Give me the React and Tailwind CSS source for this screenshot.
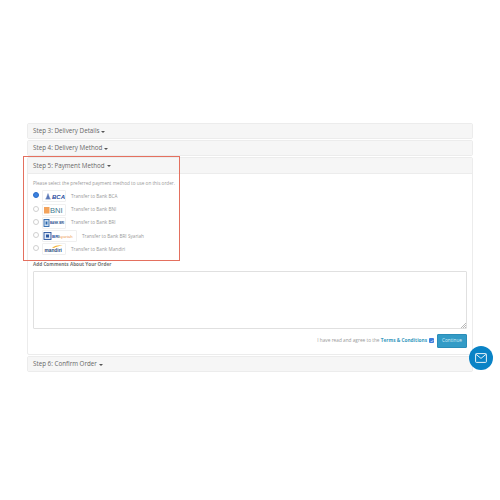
import React from "react";

const Caret = () => <span className="inline-block ml-[2px] align-middle w-0 h-0 border-x-[2px] border-x-transparent border-t-[2px] border-t-[#555]" />;

const Head = ({ children, open }) => (
  <div className={open
    ? "flex items-center h-[16px] px-[5px] bg-[#f6f6f6] text-[#666] text-[6.25px] border-b border-[#ececec]"
    : "flex items-center h-[14px] px-[5px] bg-[#f6f6f6] text-[#666] text-[6.25px]"}>
    <span>{children}<Caret /></span>
  </div>
);

const Panel = ({ children }) => (
  <div className="border border-[#ececec] rounded-[2px] bg-white">{children}</div>
);

const Logo = ({ w = 24, children }) => (
  <div className="h-[12px] border border-[#f0f0f0] rounded-[1px] bg-white flex items-center justify-center overflow-hidden" style={{ width: w }}>
    {children}
  </div>
);

const Row = ({ checked, w, logo, label }) => (
  <div className="flex items-center h-[13.3px]">
    <div className={checked
      ? "w-[6px] h-[6px] rounded-full mr-[3px] -mt-[2px] bg-[#3b82e0] border border-[#2a6cc8]"
      : "w-[6px] h-[6px] rounded-full mr-[3px] -mt-[2px] border border-[#d0d0d0] bg-white"} />
    <Logo w={w}>{logo}</Logo>
    <span className="ml-[5px] text-[4.7px] text-[#999]">{label}</span>
  </div>
);

const Bca = () => (
  <svg width="21" height="8" viewBox="0 0 21 8">
    <path d="M2 7 L4 1.5 L6 7Z M1 7 H7" fill="#5b78b8" stroke="#5b78b8" strokeWidth="0.4" />
    <text x="8" y="6.8" fontSize="6" fontWeight="700" fontStyle="italic" fill="#1f4a9c" fontFamily="Liberation Sans, sans-serif">BCA</text>
  </svg>
);
const Bni = () => (
  <svg width="22" height="10" viewBox="0 0 22 10">
    <rect x="1" y="2" width="5.5" height="6.5" fill="#f3a35c" />
    <text x="7" y="8.4" fontSize="7.6" fill="#3f7a92" fontFamily="Liberation Sans, sans-serif">BNI</text>
  </svg>
);
const Bri = () => (
  <svg width="22" height="10" viewBox="0 0 22 10">
    <rect x="1" y="1.5" width="5" height="7" fill="#cfe0f2" stroke="#2a66ac" strokeWidth="0.9" />
    <rect x="2.6" y="3.5" width="1.8" height="3" fill="#2a66ac" />
    <text x="7" y="6.3" fontSize="2.9" fontWeight="700" fill="#25508f" fontFamily="Liberation Sans, sans-serif">BANK BRI</text>
  </svg>
);
const Syariah = () => (
  <svg width="33" height="10" viewBox="0 0 33 10">
    <rect x="1" y="1.5" width="7" height="7" fill="#dfe8f5" stroke="#2a569f" strokeWidth="0.9" />
    <rect x="3" y="3.5" width="3" height="3" fill="#2a569f" />
    <text x="9" y="7" fontSize="4.4" fontWeight="700" fill="#2a569f" fontFamily="Liberation Sans, sans-serif">BRI</text>
    <text x="16" y="7" fontSize="4.2" fill="#ee9a55" fontFamily="Liberation Sans, sans-serif">syariah</text>
  </svg>
);
const Mandiri = () => (
  <svg width="22" height="10" viewBox="0 0 22 10">
    <path d="M9 3.5 Q14 0.5 20 1.5 Q14 2 11 4Z" fill="#f2b233" />
    <text x="1.5" y="8.4" fontSize="4.8" fontWeight="700" fill="#2a4a80" fontFamily="Liberation Sans, sans-serif">mandiri</text>
  </svg>
);

export default function App() {
  return (
    <div className="relative w-[500px] h-[500px] bg-white overflow-hidden pt-[123px] px-[27px]" style={{ fontFamily: '"Open Sans", sans-serif' }}>
      <div className="flex flex-col gap-[1px] w-[446px]">
        <Panel><Head>Step 3: Delivery Details</Head></Panel>
        <Panel><Head>Step 4: Delivery Method</Head></Panel>
        <Panel>
          <Head open>Step 5: Payment Method</Head>
          <div className="px-[5px] pt-[6px] h-[180px] flex flex-col">
            <p className="text-[4.67px] leading-[7px] text-[#999] mb-[2.6px]">Please select the preferred payment method to use on this order.</p>
            <Row checked w={24} logo={<Bca />} label="Transfer to Bank BCA" />
            <Row w={24} logo={<Bni />} label="Transfer to Bank BNI" />
            <Row w={24} logo={<Bri />} label="Transfer to Bank BRI" />
            <Row w={35} logo={<Syariah />} label="Transfer to Bank BRI Syariah" />
            <Row w={24} logo={<Mandiri />} label="Transfer to Bank Mandiri" />
            <p className="text-[4.7px] leading-[7px] font-bold text-[#777] mt-[5px]">Add Comments About Your Order</p>
            <div className="relative mt-[2.9px] h-[58px] border border-[#e0e0e0] rounded-[1px] bg-white">
              <svg className="absolute right-[0px] bottom-[0px]" width="6" height="6" viewBox="0 0 6 6">
                <path d="M1 6 L6 1 M3 6 L6 3 M5 6 L6 5" stroke="#999" strokeWidth="0.7" />
              </svg>
            </div>
            <div className="flex items-center justify-end mt-[5px]">
              <span className="text-[4.75px] text-[#999]">I have read and agree to the&nbsp;</span>
              <span className="text-[4.75px] font-bold text-[#3a9ac0]">Terms &amp; Conditions</span>
              <span className="ml-[2px] w-[5px] h-[5px] rounded-[1px] bg-[#3f7ddc] flex items-center justify-center">
                <svg width="4" height="4" viewBox="0 0 4 4"><path d="M0.7 2 L1.7 3 L3.3 1" stroke="#fff" strokeWidth="0.6" fill="none" /></svg>
              </span>
              <button className="ml-[3px] w-[30px] h-[14px] rounded-[1px] bg-[#339bc6] border border-[#2a8db8] text-[#d8eef7] text-[4.7px] flex items-center justify-center">Continue</button>
            </div>
          </div>
        </Panel>
        <Panel><Head>Step 6: Confirm Order</Head></Panel>
      </div>
      <div className="absolute left-[23px] top-[156px] w-[157px] h-[105px] border-[1.4px] border-[#e4705f] pointer-events-none" />
      <div className="absolute left-[469px] top-[346px] w-[24px] h-[24px] rounded-full bg-[#0a83c6] flex items-center justify-center">
        <svg width="12" height="10" viewBox="0 0 12 10" fill="none" stroke="#fff" strokeWidth="0.9">
          <rect x="0.6" y="0.6" width="10.8" height="8.8" rx="0.8" />
          <path d="M0.8 1.2 L6 5.4 L11.2 1.2" />
        </svg>
      </div>
    </div>
  );
}
